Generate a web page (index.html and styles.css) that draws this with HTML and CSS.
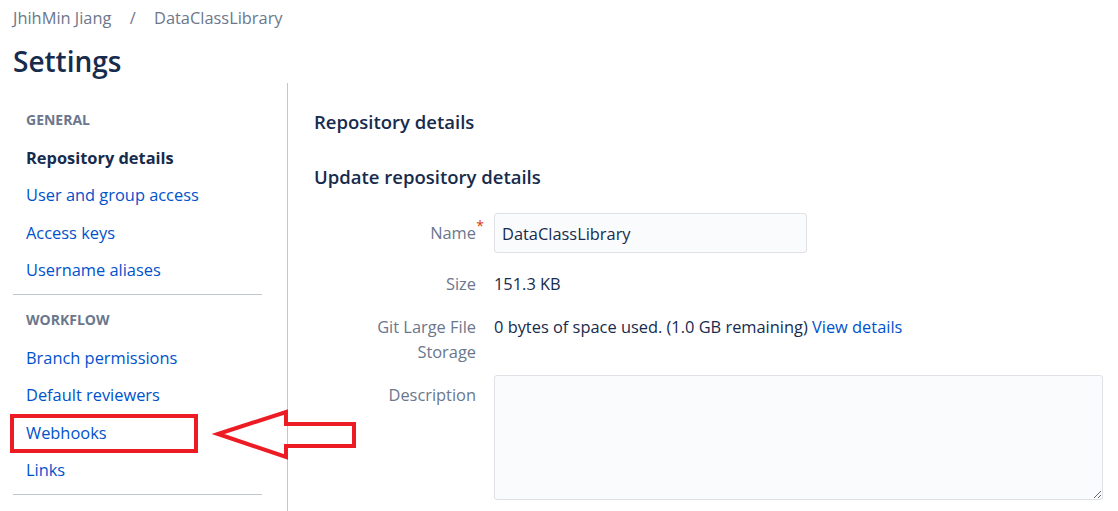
FILE: index.html
```html
<!DOCTYPE html>
<html lang="en">
<head>
    <meta charset="UTF-8">
    <title>Settings - DataClassLibrary</title>
    <link rel="stylesheet" href="styles.css">
</head>
<body>
    <header class="page-header">
        <nav class="breadcrumbs">
            <a href="#">JhihMin Jiang</a>
            <span class="sep">/</span>
            <a href="#">DataClassLibrary</a>
        </nav>
        <h1>Settings</h1>
    </header>

    <div class="layout">
        <aside class="sidebar">
            <div class="nav-group">
                <h4>General</h4>
                <ul>
                    <li><a href="#" class="active">Repository details</a></li>
                    <li><a href="#">User and group access</a></li>
                    <li><a href="#">Access keys</a></li>
                    <li><a href="#">Username aliases</a></li>
                </ul>
            </div>
            <div class="nav-group">
                <h4>Workflow</h4>
                <ul>
                    <li><a href="#">Branch permissions</a></li>
                    <li><a href="#">Default reviewers</a></li>
                    <li><a href="#">Webhooks</a></li>
                    <li><a href="#">Links</a></li>
                </ul>
            </div>
        </aside>

        <main class="content">
            <h2>Repository details</h2>
            <h3>Update repository details</h3>

            <form class="details-form">
                <div class="field">
                    <label class="required">Name</label>
                    <input type="text" value="DataClassLibrary">
                </div>
                <div class="field">
                    <label>Size</label>
                    <div class="value">151.3 KB</div>
                </div>
                <div class="field">
                    <label>Git Large File Storage</label>
                    <div class="value">0 bytes of space used. (1.0 GB remaining) <a href="#">View details</a></div>
                </div>
                <div class="field">
                    <label>Description</label>
                    <textarea></textarea>
                </div>
            </form>
        </main>
    </div>

    <!-- Annotation drawn over the screenshot -->
    <svg class="annotation" width="1118" height="511" viewBox="0 0 1118 511">
        <rect x="12" y="416" width="184" height="35" fill="none" stroke="#ed1c24" stroke-width="4"/>
        <polygon points="218,434 286,412 286,424 354,424 354,446 286,446 286,457" fill="none" stroke="#ed1c24" stroke-width="4" stroke-linejoin="miter"/>
    </svg>
</body>
</html>
```

FILE: styles.css
```css
* {
    margin: 0;
    padding: 0;
    box-sizing: border-box;
}

body {
    font-family: 'Open Sans', 'Noto Sans', sans-serif;
    font-size: 16.4px;
    color: #172b4d;
    background: #ffffff;
    position: relative;
    overflow: hidden;
}

a {
    color: #0052cc;
    text-decoration: none;
}

/* Header */
.page-header {
    padding: 6px 13px 0;
}

.breadcrumbs {
    line-height: 24px;
    font-size: 16.4px;
}

.breadcrumbs a {
    color: #6b778c;
}

.breadcrumbs .sep {
    color: #6b778c;
    margin: 0 14px;
}

.page-header h1 {
    font-size: 28px;
    font-weight: 600;
    line-height: 40px;
    margin-top: 11px;
    color: #172b4d;
}

/* Layout */
.layout {
    display: flex;
    margin-top: 2px;
}

.sidebar {
    width: 288px;
    flex-shrink: 0;
    padding: 18px 25px 0 13px;
    border-right: 1px solid #c1c7d0;
    min-height: 430px;
}

.nav-group {
    border-bottom: 1px solid #c1c7d0;
    padding: 0 13px 5.5px;
}

.nav-group + .nav-group {
    padding-top: 6.25px;
}

.nav-group h4 {
    font-size: 14px;
    font-weight: 700;
    text-transform: uppercase;
    color: #6b778c;
    line-height: 37.5px;
}

.nav-group ul {
    list-style: none;
}

.nav-group li {
    line-height: 37.5px;
}

.nav-group a.active {
    color: #172b4d;
    font-weight: 700;
}

/* Content */
.content {
    flex: 1;
    padding: 27px 16px 0 26px;
}

.content h2 {
    font-size: 18.5px;
    font-weight: 600;
    line-height: 24px;
}

.content h3 {
    font-size: 18.5px;
    font-weight: 600;
    line-height: 24px;
    margin-top: 31px;
}

.details-form {
    margin-top: 24px;
    margin-left: 12px;
}

.field {
    display: flex;
    margin-bottom: 11px;
}

.field label {
    width: 168px;
    flex-shrink: 0;
    padding: 7px 18px 0 0;
    text-align: right;
    color: #6b778c;
    line-height: 25px;
    position: relative;
}

.field label.required::after {
    content: '*';
    position: absolute;
    right: 10px;
    top: 0;
    color: #de350b;
    font-size: 14px;
}

.field .value {
    padding-top: 7px;
    line-height: 25px;
}

.field input,
.field textarea {
    font-family: inherit;
    font-size: 16.4px;
    color: #172b4d;
    background: #fafbfc;
    border: 1px solid #dfe1e6;
    border-radius: 3px;
    outline: none;
}

.field input {
    width: 313px;
    height: 40px;
    padding: 0 7px;
}

.field textarea {
    width: 609px;
    height: 125px;
    resize: vertical;
}

.annotation {
    position: absolute;
    left: 0;
    top: 0;
    pointer-events: none;
}
```
